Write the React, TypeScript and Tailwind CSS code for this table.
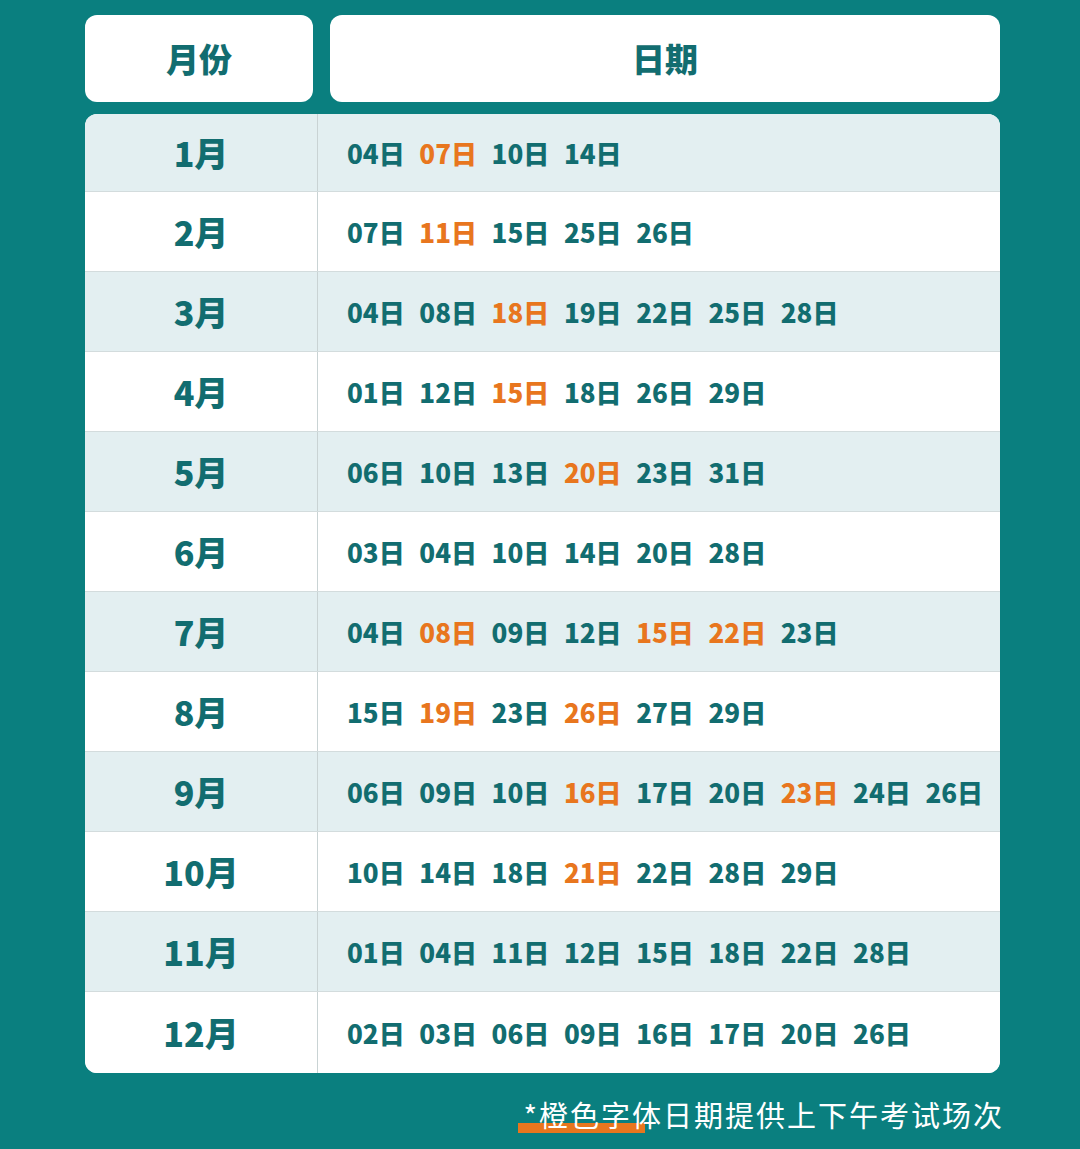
import React from "react";

type Row = { month: string; dates: [string, boolean][] };

const d = (s: string): [string, boolean][] =>
	s.split(" ").map((x) => [x.replace("*", ""), x.startsWith("*")]);

const rows: Row[] = [
	{ month: "1月", dates: d("04 *07 10 14") },
	{ month: "2月", dates: d("07 *11 15 25 26") },
	{ month: "3月", dates: d("04 08 *18 19 22 25 28") },
	{ month: "4月", dates: d("01 12 *15 18 26 29") },
	{ month: "5月", dates: d("06 10 13 *20 23 31") },
	{ month: "6月", dates: d("03 04 10 14 20 28") },
	{ month: "7月", dates: d("04 *08 09 12 *15 *22 23") },
	{ month: "8月", dates: d("15 *19 23 *26 27 29") },
	{ month: "9月", dates: d("06 09 10 *16 17 20 *23 24 26") },
	{ month: "10月", dates: d("10 14 18 *21 22 28 29") },
	{ month: "11月", dates: d("01 04 11 12 15 18 22 28") },
	{ month: "12月", dates: d("02 03 06 09 16 17 20 26") },
];

const font = { fontFamily: '"Noto Sans CJK SC", "Noto Sans", sans-serif' };

export default function App() {
	return (
		<div className="min-h-screen w-[1080px] bg-[#0a7f7f] pt-[15px]" style={font}>
			<div className="ml-[85px] w-[915px]">
				{/* header */}
				<div className="flex gap-[17px]">
					<div className="flex h-[87px] w-[228px] items-center justify-center rounded-[12px] bg-white text-[33px] font-black text-[#126d70]">
						月份
					</div>
					<div className="flex h-[87px] flex-1 items-center justify-center rounded-[12px] bg-white text-[33px] font-black text-[#126d70]">
						日期
					</div>
				</div>

				{/* table */}
				<div className="mt-[12px] overflow-hidden rounded-[12px] bg-white">
					{rows.map((r, i) => (
						<div
							key={r.month}
							className={`flex ${i === 0 ? "h-[77px]" : i === 11 ? "h-[82px]" : "h-[80px]"} ${i % 2 === 0 ? "bg-[#e3eff1]" : "bg-white"} ${i > 0 ? "border-t border-[#d3dcdd]" : ""}`}
						>
							<div className="flex w-[233px] items-center justify-center border-r border-[#c9d3d4] text-[34px] font-black text-[#126d70]">
								{r.month}
							</div>
							<div className="flex flex-1 items-center pl-[29px]">
								{r.dates.map(([n, hot]) => (
									<span
										key={n}
										className={`w-[72.3px] shrink-0 whitespace-nowrap text-[26px] font-black ${hot ? "text-[#e8761e]" : "text-[#126d70]"}`}
									>
										{n}日
									</span>
								))}
							</div>
						</div>
					))}
				</div>

				{/* footnote */}
				<div className="flex justify-end pt-[21px]">
					<div className="relative mr-[-4px]">
						<div className="absolute left-[-5px] top-[29px] h-[10px] w-[127px] bg-[#e8761e]" />
						<span className="relative text-[29px] leading-[40px] tracking-[2px] text-white">
							*橙色字体日期提供上下午考试场次
						</span>
					</div>
				</div>
			</div>
		</div>
	);
}
